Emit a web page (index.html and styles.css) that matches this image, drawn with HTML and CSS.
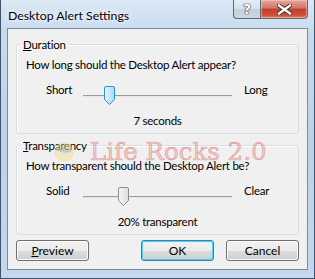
FILE: index.html
```html
<!DOCTYPE html>
<html lang="en">
<head>
    <meta charset="UTF-8">
    <meta name="viewport" content="width=device-width, initial-scale=1.0">
    <title>Desktop Alert Settings</title>
    <link rel="stylesheet" href="styles.css">
</head>
<body>
    <div class="window">
        <div class="titlebar">
            <span class="title">Desktop Alert Settings</span>
            <div class="caption-buttons">
                <div class="cap-btn help">?</div>
                <div class="cap-btn close">
                    <svg width="15" height="11" viewBox="0 0 15 11">
                        <path d="M2 1.5 L13 9.5 M13 1.5 L2 9.5" stroke="#3d2b28" stroke-width="4.2" stroke-linecap="square"/>
                        <path d="M2 1.5 L13 9.5 M13 1.5 L2 9.5" stroke="#ffffff" stroke-width="2.4" stroke-linecap="square"/>
                    </svg>
                </div>
            </div>
        </div>

        <div class="client">
            <fieldset class="group">
                <legend><u>D</u>uration</legend>
                <p class="prompt">How long should the Desktop Alert appear?</p>
                <div class="slider-row">
                    <span class="end-label">Short</span>
                    <div class="slider">
                        <div class="track"></div>
                        <svg class="thumb" style="left: 21px" width="11" height="20" viewBox="0 0 11 20">
                            <defs>
                                <linearGradient id="thumbBlue" x1="0" x2="1">
                                    <stop offset="0" stop-color="#e6f5fd"/>
                                    <stop offset="1" stop-color="#a9dbf6"/>
                                </linearGradient>
                            </defs>
                            <path d="M2 0.5 H9 A1.5 1.5 0 0 1 10.5 2 V13.5 L5.5 18.5 L0.5 13.5 V2 A1.5 1.5 0 0 1 2 0.5 Z" fill="url(#thumbBlue)" stroke="#2b8ee4"/>
                        </svg>
                    </div>
                    <span class="end-label">Long</span>
                </div>
                <p class="value">7 seconds</p>
            </fieldset>

            <fieldset class="group">
                <legend><u>T</u>ransparency</legend>
                <p class="prompt">How transparent should the Desktop Alert be?</p>
                <div class="slider-row">
                    <span class="end-label">Solid</span>
                    <div class="slider">
                        <div class="track"></div>
                        <svg class="thumb" style="left: 35px" width="11" height="20" viewBox="0 0 11 20">
                            <defs>
                                <linearGradient id="thumbGray" x1="0" x2="1">
                                    <stop offset="0" stop-color="#f7f7f7"/>
                                    <stop offset="1" stop-color="#dcdcdc"/>
                                </linearGradient>
                            </defs>
                            <path d="M2 0.5 H9 A1.5 1.5 0 0 1 10.5 2 V13.5 L5.5 18.5 L0.5 13.5 V2 A1.5 1.5 0 0 1 2 0.5 Z" fill="url(#thumbGray)" stroke="#8c8c8c"/>
                        </svg>
                    </div>
                    <span class="end-label">Clear</span>
                </div>
                <p class="value">20% transparent</p>
            </fieldset>

            <div class="buttons">
                <button class="btn"><u>P</u>review</button>
                <span class="spacer"></span>
                <button class="btn default">OK</button>
                <button class="btn">Cancel</button>
            </div>

            <!-- blog watermark stamped over the dialog -->
            <div class="watermark">
                <svg class="wm-globe" width="24" height="24" viewBox="0 0 24 24">
                    <circle cx="12" cy="12" r="10" fill="#f3d98a" opacity="0.45"/>
                    <path d="M4 10 Q12 4 20 11 Q13 15 4 10 Z" fill="#7fa8d8" opacity="0.45"/>
                </svg>
                <span class="wm-text">Life Rocks 2.0</span>
            </div>
        </div>
    </div>
</body>
</html>
```

FILE: styles.css
```css
body {
    margin: 0;
    padding: 0;
    font-family: Lato, "Liberation Sans", sans-serif;
    font-size: 11.5px;
    letter-spacing: -0.25px;
    color: #000;
}
.window {
    width: 315px;
    height: 279px;
    box-sizing: border-box;
    border: 1px solid #40536a;
    border-top: none;
    background: linear-gradient(#dbe8f5, #c8dbef 30px, #bcd2ea 140px, #c3d8ee);
}
.titlebar {
    height: 28px;
    display: flex;
    justify-content: space-between;
    align-items: flex-start;
}
.title {
    margin: 8px 0 0 7px;
    font-size: 12.3px;
    letter-spacing: 0;
    line-height: 15px;
    text-shadow: 0 0 6px #fff, 0 0 3px #fff;
}
.caption-buttons {
    display: flex;
    margin-right: 6px;
}
.cap-btn {
    height: 19px;
    box-sizing: border-box;
    border: 1px solid #5b6a7c;
    border-top: none;
    display: flex;
    align-items: center;
    justify-content: center;
}
.help {
    width: 27px;
    border-right: none;
    border-bottom-left-radius: 4px;
    background: linear-gradient(#e4ecf4, #d6e0ea 50%, #c2cfdc 51%, #cdd8e4);
    font-family: "DejaVu Sans", sans-serif;
    font-weight: bold;
    font-size: 14px;
    letter-spacing: 0;
    color: #fff;
    text-shadow: 0 0 1px #333, 0 0 1px #333, 0 0 1px #333;
}
.close {
    width: 48px;
    border-bottom-right-radius: 4px;
    background: linear-gradient(#e3a99e, #d27565 45%, #c2412c 50%, #d04f36 85%, #e3856a);
    box-shadow: inset 0 0 0 1px rgba(255, 210, 200, 0.5);
}
.client {
    position: relative;
    margin: 0 6px 0 6px;
    height: 242px;
    box-sizing: border-box;
    border: 1px solid #7d8b9b;
    background-color: #f0f0f0;
    padding: 8px 8px 0 8px;
}
.group {
    margin: 0;
    padding: 0 0 5px 0;
    border: 1px solid #d5dfe5;
    border-radius: 3px;
    box-shadow: inset 1px 1px 0 #fff;
}
.group + .group {
    margin-top: 4px;
}
.group legend {
    margin-left: 4px;
    padding: 0 2px;
    line-height: 15px;
}
.prompt {
    margin: 5px 0 0 9px;
    line-height: 15px;
}
.slider-row {
    display: flex;
    align-items: flex-start;
    margin-top: 14px;
    height: 20px;
}
.end-label {
    line-height: 15px;
    margin-top: -4px;
}
.end-label:first-child {
    width: 37px;
    padding-left: 29px;
}
.end-label:last-child {
    padding-left: 12px;
}
.slider {
    position: relative;
    width: 149px;
    height: 20px;
}
.track {
    margin-top: 9px;
    height: 1px;
    background-color: #9c9c9c;
    border-bottom: 1px solid #e6e6e6;
}
.thumb {
    position: absolute;
    top: 0;
}
.value {
    margin: 7px 0 0 0;
    text-align: center;
    line-height: 15px;
}
.buttons {
    display: flex;
    gap: 12px;
    margin-top: 5px;
}
.spacer {
    flex: 1;
}
.btn {
    width: 73px;
    height: 21px;
    padding: 0;
    font-family: inherit;
    font-size: 12px;
    letter-spacing: 0;
    color: #000;
    border: 1px solid #707070;
    border-radius: 3px;
    background: linear-gradient(#f2f2f2, #ebebeb 50%, #dddddd 50%, #cfcfcf);
    box-shadow: inset 0 0 0 1px #fbfbfb;
}
.btn.default {
    border-color: #3c7fb1;
    box-shadow: inset 0 0 0 1px #48d2f8;
}
.watermark {
    position: absolute;
    left: 44px;
    top: 108px;
    display: flex;
    align-items: center;
    gap: 14px;
    pointer-events: none;
}
.wm-text {
    font-family: "DejaVu Serif", serif;
    font-size: 24.5px;
    letter-spacing: 0;
    color: rgba(235, 150, 150, 0.45);
    -webkit-text-stroke: 0.6px rgba(210, 70, 70, 0.45);
    white-space: nowrap;
}
```
